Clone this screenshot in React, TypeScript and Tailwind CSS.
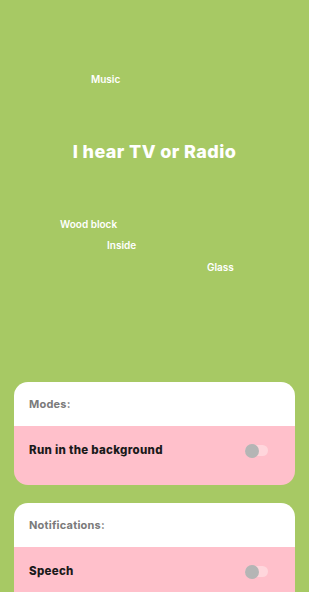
export default function App() {
  // word cloud: free-canvas placement is the content here
  const words = [
    { text: 'Music', left: 'left-[91px]', top: 'top-[72px]' },
    { text: 'Wood block', left: 'left-[60px]', top: 'top-[217px]' },
    { text: 'Inside', left: 'left-[107px]', top: 'top-[238px]' },
    { text: 'Glass', left: 'left-[207px]', top: 'top-[260px]' },
  ]

  const sections = [
    { title: 'Modes:', item: 'Run in the background' },
    { title: 'Notifications:', item: 'Speech' },
  ]

  return (
    <div className="w-[309px] h-[592px] overflow-hidden bg-[#a7c964] font-['Inter','Open_Sans',sans-serif]">
      <div className="relative h-[382px]">
        {words.map(w => (
          <span
            key={w.text}
            className={`absolute ${w.left} ${w.top} text-[10px] font-semibold text-white leading-[14px]`}
          >
            {w.text}
          </span>
        ))}
        <h1 className="absolute left-0 right-0 top-[141px] text-center text-[18px] font-extrabold text-white tracking-[0.4px] leading-[22px]">
          I hear TV or Radio
        </h1>
      </div>

      <div className="flex flex-col gap-[18px] px-[14px]">
        {sections.map(s => (
          <div key={s.title} className="rounded-[14px] overflow-hidden">
            <div className="bg-white h-[44px] flex items-center px-[15px]">
              <span className="text-[11px] font-bold text-[#7a7a7a] tracking-[0.2px]">{s.title}</span>
            </div>
            <div className="bg-[#ffc0cb] h-[59px] flex items-start justify-between pl-[15px] pr-[27px] pt-[16px]">
              <span className="text-[11.5px] font-extrabold text-[#1a1a1a] leading-[16px] tracking-[0.3px]">{s.item}</span>
              <div className="relative mt-[3px] w-[23px] h-[11px] rounded-full bg-[#ffd6dc]">
                <div className="absolute left-0 -top-[1.5px] w-[14px] h-[14px] rounded-full bg-[#b5b5b5]" />
              </div>
            </div>
          </div>
        ))}
      </div>
    </div>
  )
}
